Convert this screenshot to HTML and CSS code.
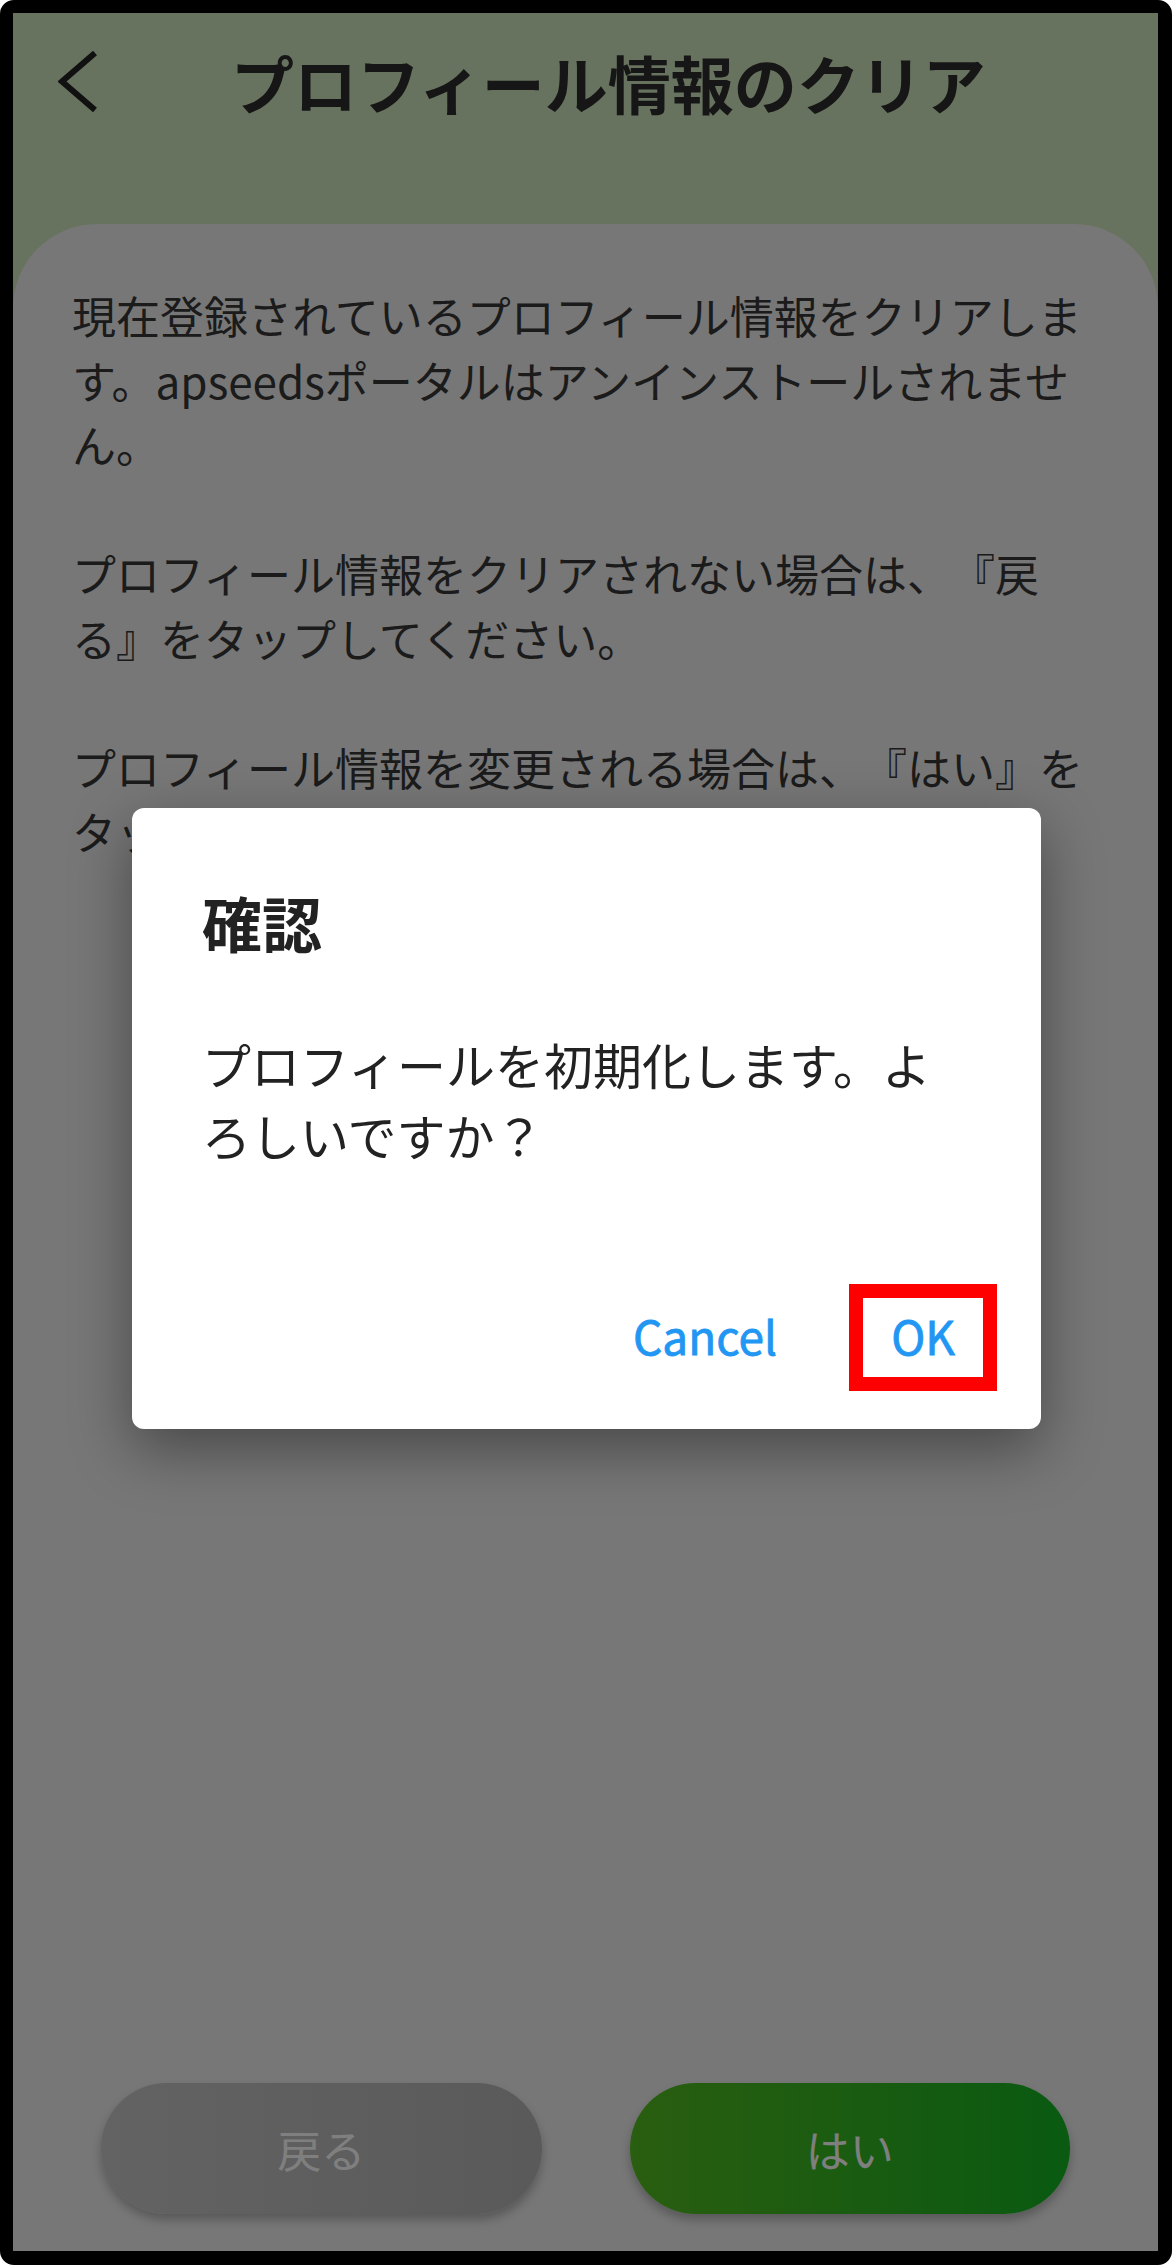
FILE: index.html
```html
<!DOCTYPE html>
<html lang="ja">
<head>
    <meta charset="UTF-8">
    <meta name="viewport" content="width=device-width, initial-scale=1.0">
    <title>プロフィール情報のクリア</title>
    <link rel="stylesheet" href="styles.css">
</head>
<body>
    <div class="device">
        <div class="screen">
            <header class="top-bar">
                <button class="back-btn" aria-label="戻る">
                    <svg width="40" height="62" viewBox="0 0 40 62">
                        <polyline points="37,2 4,30.5 37,59" fill="none" stroke="#222" stroke-width="6"/>
                    </svg>
                </button>
                <h1 class="page-title">プロフィール情報のクリア</h1>
            </header>

            <main class="sheet">
                <div class="sheet-text">
                    <p>現在登録されているプロフィール情報をクリアします。apseedsポータルはアンインストールされません。</p>
                    <p>プロフィール情報をクリアされない場合は、『戻る』をタップしてください。</p>
                    <p>プロフィール情報を変更される場合は、『はい』をタップしてください。</p>
                </div>
                <div class="sheet-actions">
                    <button class="pill pill-gray">戻る</button>
                    <button class="pill pill-green">はい</button>
                </div>
            </main>

            <div class="scrim"></div>

            <div class="dialog">
                <h2 class="dialog-title">確認</h2>
                <p class="dialog-msg">プロフィールを初期化します。よろしいですか？</p>
                <div class="dialog-actions">
                    <button class="text-btn">Cancel</button>
                    <button class="text-btn marked">OK</button>
                </div>
            </div>
        </div>
    </div>
</body>
</html>
```

FILE: styles.css
```css
* {
    box-sizing: border-box;
}
body {
    margin: 0;
    background-color: #fff;
    font-family: "Noto Sans CJK JP", "Noto Sans", sans-serif;
    text-spacing-trim: space-all;
}
button {
    font-family: inherit;
    border: none;
    background: none;
    padding: 0;
    cursor: pointer;
}
.device {
    width: 1172px;
    height: 2265px;
    border: solid #000;
    border-width: 13px 14px 14px 13px;
    border-radius: 14px;
    background-color: #000;
}
.screen {
    position: relative;
    height: 100%;
    display: flex;
    flex-direction: column;
    background-color: #cee6bc;
    overflow: hidden;
}
.top-bar {
    height: 211px;
    flex-shrink: 0;
    display: flex;
    align-items: flex-start;
    padding: 33px 0 0 45px;
}
.back-btn {
    width: 40px;
    height: 72px;
    display: flex;
    align-items: center;
}
.page-title {
    margin: 0 0 0 133px;
    font-size: 63px;
    line-height: 72px;
    font-weight: 700;
    color: #2c2c2c;
}
.sheet {
    flex: 1;
    display: flex;
    flex-direction: column;
    background-color: #eee;
    border-radius: 84px 84px 0 0;
    padding: 59px 59px 37px;
}
.sheet-text p {
    margin: 0 0 64.5px;
    font-size: 44px;
    line-height: 64.5px;
    color: #363636;
}
.sheet-actions {
    margin-top: auto;
    display: flex;
    gap: 88px;
    padding: 0 29px;
}
.pill {
    flex: 1;
    height: 131px;
    border-radius: 66px;
    font-size: 44px;
    color: #fff;
    box-shadow: 0 6px 10px rgba(0, 0, 0, 0.25);
}
.pill-gray {
    background: linear-gradient(to right, #c6c6c6, #b4b4b4);
}
.pill-green {
    background: linear-gradient(to right, #54bc20, #14b424);
}
.scrim {
    position: absolute;
    inset: 0;
    background-color: rgba(0, 0, 0, 0.5);
}
.dialog {
    position: absolute;
    top: 795px;
    left: 119px;
    width: 909px;
    background-color: #fff;
    border-radius: 12px;
    padding: 78px 0 38px;
    box-shadow: 0 20px 60px rgba(0, 0, 0, 0.4);
}
.dialog-title {
    margin: 0;
    padding-left: 70px;
    font-size: 60px;
    line-height: 72px;
    font-weight: 700;
    color: #222;
}
.dialog-msg {
    margin: 70px 0 0;
    padding: 0 90px 0 70px;
    font-size: 49px;
    line-height: 71px;
    color: #222;
}
.dialog-actions {
    margin-top: 114px;
    display: flex;
    justify-content: flex-end;
    align-items: center;
    gap: 44px;
    padding-right: 44px;
}
.text-btn {
    font-size: 46px;
    font-weight: 400;
    line-height: 75px;
    padding: 0 28px 4px;
    color: #2196f3;
    -webkit-text-stroke: 0.8px #2196f3;
}
.marked {
    border: 14px solid #f00;
}
```
